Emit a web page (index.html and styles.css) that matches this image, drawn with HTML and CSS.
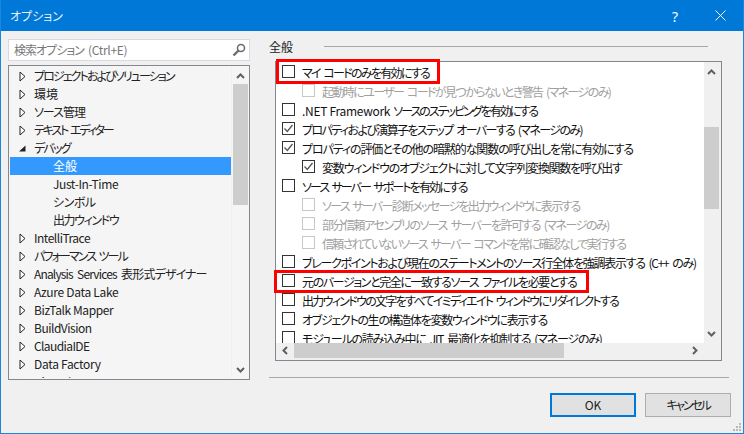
FILE: index.html
```html
<!DOCTYPE html>
<html lang="ja">
<head>
<meta charset="utf-8">
<title>オプション</title>
<link rel="stylesheet" href="styles.css">
</head>
<body>
<div class="window">
  <header class="titlebar">
    <span class="title">オプション</span>
    <span class="help">?</span>
    <svg class="close" width="12" height="12" viewBox="0 0 12 12"><path d="M.5.5l10 10M10.500.5l-10 10" stroke="#fff" fill="none"/></svg>
  </header>
  <main class="body">
    <section class="left">
      <div class="search">
        <span class="search-text t10 ws">検索オプション <span class="latin">(Ctrl+E)</span></span>
        <svg class="search-icon" width="14" height="14" viewBox="0 0 14 14"><circle cx="9" cy="5" r="3.500" fill="#fff" stroke="#6d6d6d" stroke-width="1.600"/><path d="M6.500 7.500L1.500 12.500" stroke="#6d6d6d" stroke-width="2.400"/></svg>
      </div>
      <div class="tree">
        <ul class="tree-rows">
          <li class="node t19"><svg class="tri" width="7" height="11" viewBox="0 0 7 11"><path d="M1 1l5 4.500-5 4.500z" fill="#fff" stroke="#222"/></svg>プロジェクトおよびソリューション</li>
          <li class="node"><svg class="tri" width="7" height="11" viewBox="0 0 7 11"><path d="M1 1l5 4.500-5 4.500z" fill="#fff" stroke="#222"/></svg>環境</li>
          <li class="node t10"><svg class="tri" width="7" height="11" viewBox="0 0 7 11"><path d="M1 1l5 4.500-5 4.500z" fill="#fff" stroke="#222"/></svg>ソース管理</li>
          <li class="node t22 ws"><svg class="tri" width="7" height="11" viewBox="0 0 7 11"><path d="M1 1l5 4.500-5 4.500z" fill="#fff" stroke="#222"/></svg>テキスト エディター</li>
          <li class="node t18"><svg class="tri" width="7" height="11" viewBox="0 0 7 11"><path d="M0 8.500h6.500v-6z" fill="#222"/></svg>デバッグ</li>
          <li class="leaf selected">全般</li>
          <li class="leaf t04">Just-In-Time</li>
          <li class="leaf t05">シンボル</li>
          <li class="leaf t14">出力ウィンドウ</li>
          <li class="node t05"><svg class="tri" width="7" height="11" viewBox="0 0 7 11"><path d="M1 1l5 4.500-5 4.500z" fill="#fff" stroke="#222"/></svg>IntelliTrace</li>
          <li class="node t19 ws"><svg class="tri" width="7" height="11" viewBox="0 0 7 11"><path d="M1 1l5 4.500-5 4.500z" fill="#fff" stroke="#222"/></svg>パフォーマンス ツール</li>
          <li class="node t09 ws"><svg class="tri" width="7" height="11" viewBox="0 0 7 11"><path d="M1 1l5 4.500-5 4.500z" fill="#fff" stroke="#222"/></svg>Analysis Services 表形式デザイナー</li>
          <li class="node t03"><svg class="tri" width="7" height="11" viewBox="0 0 7 11"><path d="M1 1l5 4.500-5 4.500z" fill="#fff" stroke="#222"/></svg>Azure Data Lake</li>
          <li class="node t04"><svg class="tri" width="7" height="11" viewBox="0 0 7 11"><path d="M1 1l5 4.500-5 4.500z" fill="#fff" stroke="#222"/></svg>BizTalk Mapper</li>
          <li class="node t05"><svg class="tri" width="7" height="11" viewBox="0 0 7 11"><path d="M1 1l5 4.500-5 4.500z" fill="#fff" stroke="#222"/></svg>BuildVision</li>
          <li class="node t06"><svg class="tri" width="7" height="11" viewBox="0 0 7 11"><path d="M1 1l5 4.500-5 4.500z" fill="#fff" stroke="#222"/></svg>ClaudiaIDE</li>
          <li class="node t03"><svg class="tri" width="7" height="11" viewBox="0 0 7 11"><path d="M1 1l5 4.500-5 4.500z" fill="#fff" stroke="#222"/></svg>Data Factory</li>
          <li class="node t04"><svg class="tri" width="7" height="11" viewBox="0 0 7 11"><path d="M1 1l5 4.500-5 4.500z" fill="#fff" stroke="#222"/></svg>BitVault</li>
        </ul>
        <div class="vbar tree-bar">
          <svg class="chev" width="9" height="6" viewBox="0 0 9 6"><path d="M1 5l3.500-3.500L8 5" fill="none" stroke="#606060" stroke-width="2"/></svg>
          <div class="thumb tree-thumb"></div>
          <svg class="chev end" width="9" height="6" viewBox="0 0 9 6"><path d="M1 1l3.500 3.500L8 1" fill="none" stroke="#606060" stroke-width="2"/></svg>
        </div>
      </div>
    </section>
    <section class="right">
      <div class="group-head"><span class="group-title">全般</span><span class="group-line"></span></div>
      <div class="panel">
        <div class="panel-top">
          <ul class="options">
            <li class="opt t17"><span class="box"></span><span class="lbl">マイ コードのみを有効にする</span></li>
            <li class="opt sub off t16"><span class="box"></span><span class="lbl">起動時にユーザー コードが見つからないとき警告 (マネージのみ)</span></li>
            <li class="opt t20"><span class="box"></span><span class="lbl"><span class="latin">.NET Framework</span> ソースのステッピングを有効にする</span></li>
            <li class="opt t16"><span class="box"><svg width="11" height="11" viewBox="0 0 11 11"><path d="M1.500 5.500l2.800 3L9.500 2" fill="none" stroke="#555" stroke-width="1.300"/></svg></span><span class="lbl">プロパティおよび演算子をステップ オーバーする (マネージのみ)</span></li>
            <li class="opt t11"><span class="box"><svg width="11" height="11" viewBox="0 0 11 11"><path d="M1.500 5.500l2.800 3L9.500 2" fill="none" stroke="#555" stroke-width="1.300"/></svg></span><span class="lbl">プロパティの評価とその他の暗黙的な関数の呼び出しを常に有効にする</span></li>
            <li class="opt sub t12"><span class="box"><svg width="11" height="11" viewBox="0 0 11 11"><path d="M1.500 5.500l2.800 3L9.500 2" fill="none" stroke="#555" stroke-width="1.300"/></svg></span><span class="lbl">変数ウィンドウのオブジェクトに対して文字列変換関数を呼び出す</span></li>
            <li class="opt t19"><span class="box"></span><span class="lbl">ソース サーバー サポートを有効にする</span></li>
            <li class="opt sub off t17"><span class="box"></span><span class="lbl">ソース サーバー診断メッセージを出力ウィンドウに表示する</span></li>
            <li class="opt sub off t15"><span class="box"></span><span class="lbl">部分信頼アセンブリのソース サーバーを許可する (マネージのみ)</span></li>
            <li class="opt sub off t17"><span class="box"></span><span class="lbl">信頼されていないソース サーバー コマンドを常に確認なしで実行する</span></li>
            <li class="opt t13"><span class="box"></span><span class="lbl">ブレークポイントおよび現在のステートメントのソース行全体を強調表示する (C++ のみ)</span></li>
            <li class="opt t14"><span class="box"></span><span class="lbl">元のバージョンと完全に一致するソース ファイルを必要とする</span></li>
            <li class="opt t17"><span class="box"></span><span class="lbl">出力ウィンドウの文字をすべてイミディエイト ウィンドウにリダイレクトする</span></li>
            <li class="opt t13"><span class="box"></span><span class="lbl">オブジェクトの生の構造体を変数ウィンドウに表示する</span></li>
            <li class="opt t12"><span class="box"></span><span class="lbl">モジュールの読み込み中に JIT 最適化を抑制する (マネージのみ)</span></li>
          </ul>
          <div class="vbar list-bar">
            <svg class="chev" width="9" height="6" viewBox="0 0 9 6"><path d="M1 5l3.500-3.500L8 5" fill="none" stroke="#606060" stroke-width="2"/></svg>
            <div class="thumb list-thumb"></div>
            <svg class="chev end" width="9" height="6" viewBox="0 0 9 6"><path d="M1 1l3.500 3.500L8 1" fill="none" stroke="#606060" stroke-width="2"/></svg>
          </div>
        </div>
        <div class="hbar">
          <svg width="6" height="9" viewBox="0 0 6 9"><path d="M5 1L1.500 4.500 5 8" fill="none" stroke="#606060" stroke-width="2"/></svg>
          <div class="hthumb"></div>
          <svg width="6" height="9" viewBox="0 0 6 9"><path d="M1 1l3.500 3.500L1 8" fill="none" stroke="#606060" stroke-width="2"/></svg>
        </div>
        <div class="mark mark-one"></div>
        <div class="mark mark-two"></div>
      </div>
      <div class="rule"></div>
      <div class="actions">
        <button class="btn primary">OK</button>
        <button class="btn t22">キャンセル</button>
      </div>
    </section>
    <svg class="grip" width="11" height="11" viewBox="0 0 11 11"><path d="M8 2h2v2H8zM5 5h2v2H5zM8 5h2v2H8zM2 8h2v2H2zM5 8h2v2H5zM8 8h2v2H8z" fill="#b8b8b8"/></svg>
  </main>
</div>
</body>
</html>
```
FILE: styles.css
```css
* { box-sizing: border-box; }
html, body { margin: 0; padding: 0; }
body {
  width: 744px;
  height: 434px;
  overflow: hidden;
  font: 12px/18px "Noto Sans CJK JP", "Open Sans", sans-serif;
  font-feature-settings: "palt";
  color: #111;
}
ul { list-style: none; margin: 0; padding: 0; }

/* tracking steps: the proportional CJK face runs wider than the reference */
.t03 { letter-spacing: -0.3px; }
.t04 { letter-spacing: -0.4px; }
.t05 { letter-spacing: -0.5px; }
.t06 { letter-spacing: -0.6px; }
.t09 { letter-spacing: -0.85px; }
.t10 { letter-spacing: -1px; }
.t11 { letter-spacing: -1.1px; }
.t12 { letter-spacing: -1.2px; }
.t13 { letter-spacing: -1.3px; }
.t14 { letter-spacing: -1.4px; }
.t15 { letter-spacing: -1.5px; }
.t16 { letter-spacing: -1.6px; }
.t17 { letter-spacing: -1.7px; }
.t18 { letter-spacing: -1.8px; }
.t19 { letter-spacing: -1.9px; }
.t20 { letter-spacing: -2px; }
.t22 { letter-spacing: -2.2px; }
.ws, .opt { word-spacing: 2.5px; }
.latin { letter-spacing: -0.3px; word-spacing: 0; }

.window {
  width: 744px;
  height: 434px;
  display: flex;
  flex-direction: column;
  border: 1px solid #1b87dc;
  border-top-color: #0078d7;
  background: #f0f0f0;
}
.titlebar {
  flex: 0 0 30px;
  display: flex;
  align-items: center;
  background: #0078d7;
  color: #fff;
  padding-left: 9px;
}
.title { flex: 1; color: #e6f2fb; }
.help { font: 14px "Noto Sans", sans-serif; margin-right: 37px; }
.close { margin-right: 16px; }
.body {
  flex: 1;
  position: relative;
  display: flex;
  padding: 8px 0 0 7px;
}
.left { width: 242px; display: flex; flex-direction: column; gap: 4px; }
.search {
  height: 22px;
  flex: none;
  display: flex;
  align-items: center;
  justify-content: space-between;
  padding: 0 3px 0 5px;
  background: #fff;
  border: 1px solid #d9d9e6;
}
.search-text { color: #777; }
.tree {
  height: 315px;
  flex: none;
  display: flex;
  padding: 1px;
  background: #f5f5f5;
  border: 1px solid #828790;
  overflow: hidden;
}
.tree-rows { flex: 1; overflow: hidden; }
.node, .leaf { height: 18px; white-space: nowrap; display: flex; align-items: center; color: #222; }
.node { padding-left: 9px; }
.tri { margin-right: 8px; flex: none; }
.leaf { padding-left: 43px; }
.selected { background: #3399ff; color: #fff; }
.vbar {
  flex: none;
  width: 17px;
  display: flex;
  flex-direction: column;
  align-items: center;
  background: #f0f0f0;
}
.chev { flex: none; }
.tree-bar { padding-top: 6px; background: #f5f5f5; border-left: 1px solid #f0f0f0; }
.thumb { width: 15px; background: #cdcdcd; flex: none; }
.tree-thumb { height: 121px; margin-top: 5px; }
.chev.end { margin-top: auto; margin-bottom: 5px; }
.right { width: 460px; margin-left: 19px; display: flex; flex-direction: column; }
.group-head { height: 17px; margin-top: -1px; display: flex; align-items: center; flex: none; }
.group-title { width: 55px; flex: none; color: #222; }
.group-line { width: 384px; height: 1px; background: #a8a8a8; }
.panel {
  position: relative;
  flex: none;
  width: 447px;
  height: 300px;
  margin: 6px 0 0 6px;
  border: 1px solid #828790;
  background: #fff;
  display: flex;
  flex-direction: column;
}
.panel-top { flex: 1; display: flex; min-height: 0; }
.options { flex: 1; overflow: hidden; min-width: 0; }
.opt { height: 19px; display: flex; align-items: center; white-space: nowrap; padding-left: 6px; color: #111; }
.opt .box { margin-right: 7px; }
.lbl { margin-top: 2px; }
.sub { padding-left: 26px; }
.box {
  flex: none;
  width: 13px;
  height: 13px;
  border: 1px solid #333;
  background: #fff;
  display: flex;
  align-items: center;
  justify-content: center;
}
.off { color: #a0a0a0; }
.off .box { border-color: #c8c8c8; }
.list-bar { padding-top: 7px; align-items: flex-start; }
.list-bar .chev { margin-left: 3px; }
.list-thumb { height: 82px; margin-top: 52px; }
.list-bar .chev.end { margin-bottom: 6px; }
.hbar {
  flex: none;
  height: 17px;
  background: #f0f0f0;
  display: flex;
  align-items: center;
  padding: 0 23px 2px 6px;
}
.hthumb { width: 270px; height: 15px; background: #cdcdcd; margin-left: 6px; margin-right: auto; align-self: flex-start; }
.mark { position: absolute; border: 3px solid #f00; pointer-events: none; }
.mark-one { left: 0; top: -3px; width: 164px; height: 25px; }
.mark-two { left: -2px; top: 208px; width: 315px; height: 23px; }
.rule { width: 460px; height: 1px; background: #a8a8a8; margin-top: 16px; flex: none; }
.actions { display: flex; justify-content: flex-end; gap: 9px; margin-top: 15px; width: 462px; }
.btn {
  width: 86px;
  height: 24px;
  padding: 0;
  font: inherit;
  font-feature-settings: inherit;
  color: #222;
  background: #e1e1e1;
  border: 1px solid #adadad;
}
.primary { border: 2px solid #0078d7; }
.grip { position: absolute; right: 1px; bottom: 1px; }
```
